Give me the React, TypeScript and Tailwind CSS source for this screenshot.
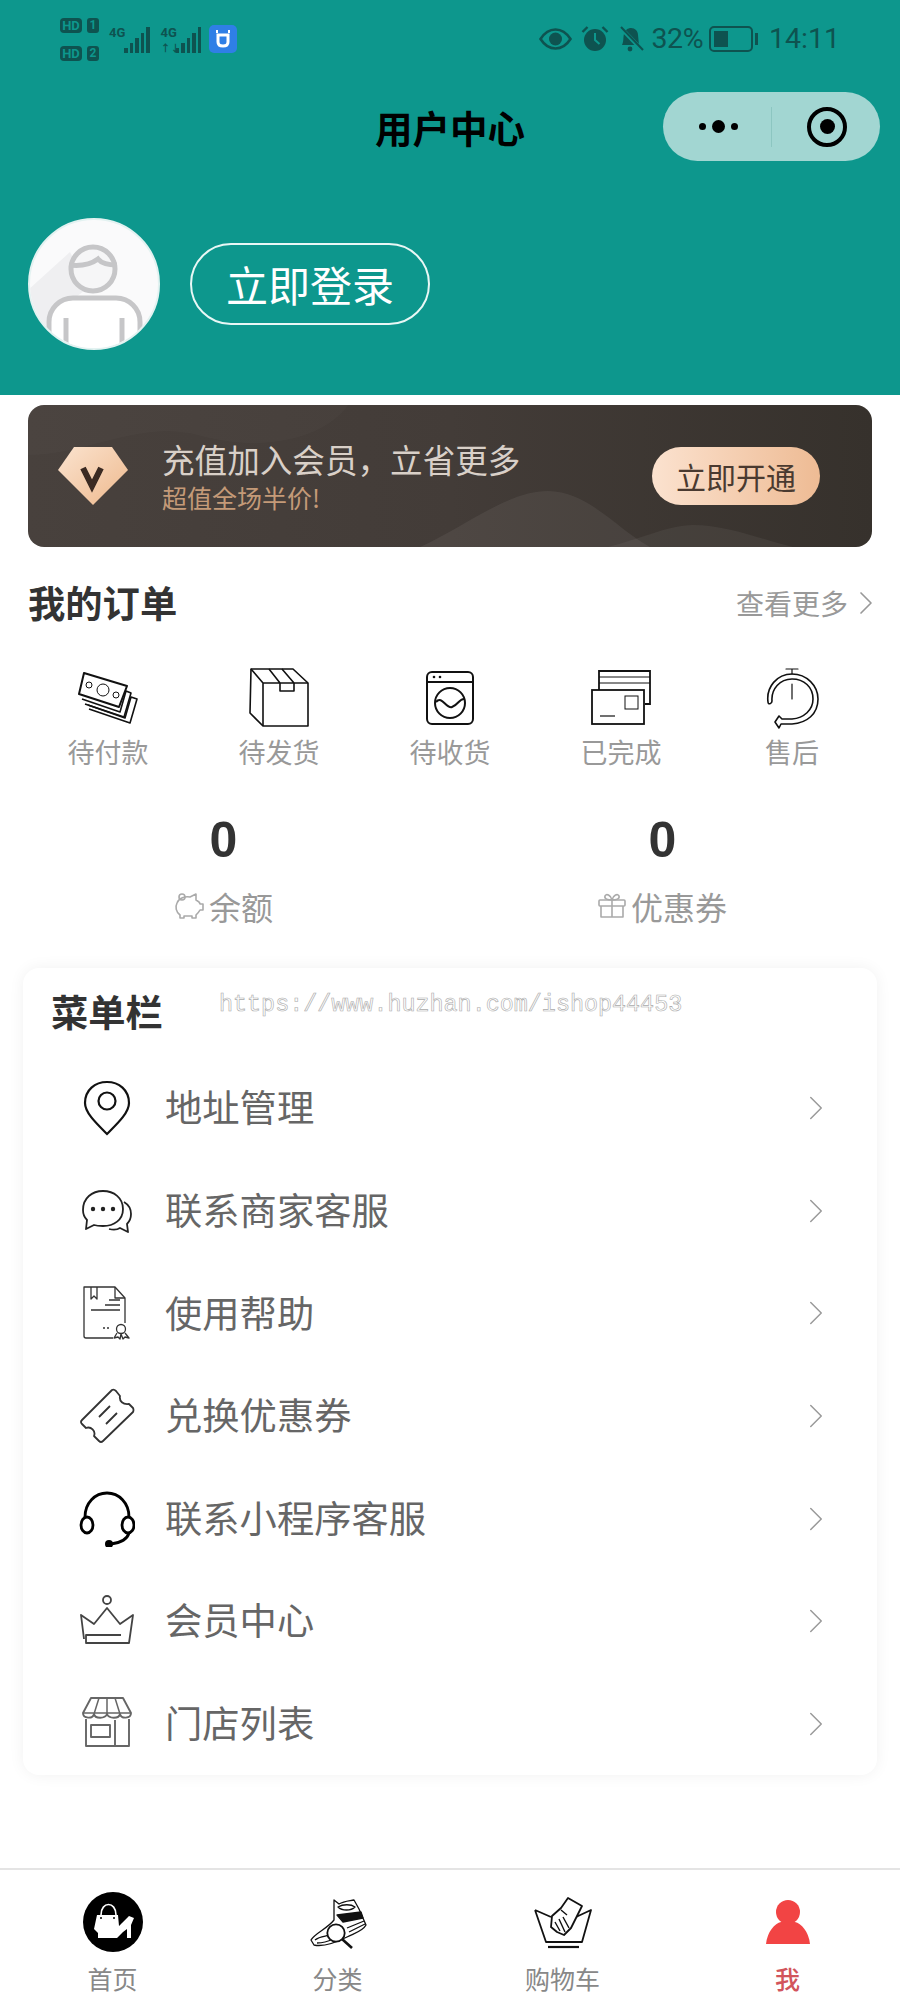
import { ChevronRight } from 'lucide-react'
import type { ReactNode } from 'react'

const Money = () => (
  <svg width="60" height="52" viewBox="0 0 60 52" fill="none" stroke="#111" strokeWidth="1.6" strokeLinejoin="round">
    <path d="M6 1 L49 14 L41 35 L1 22 Z" fill="#fff" strokeWidth="2" />
    <circle cx="25" cy="18" r="6" strokeWidth="1" />
    <circle cx="11" cy="13" r="3" strokeWidth="1" />
    <circle cx="38" cy="23" r="3" strokeWidth="1" />
    <path d="M4 27 L42 40 L48 19 L53 21 L46 45 L7 32" />
    <path d="M10 33 L47 46 L53 25 L59 27 L52 51 L11 37" />
  </svg>
)

const Box = () => (
  <svg width="60" height="60" viewBox="0 0 60 60" fill="none" stroke="#111" strokeWidth="1.6" strokeLinejoin="round">
    <path d="M2 1 H44 L59 15 V58 H14 L1 45 Z" />
    <path d="M2 1 L14 15 V58 M14 15 H59 M20 1 L31 15 V23 H45 V15 L33 1" />
  </svg>
)

const Washer = () => (
  <svg width="48" height="54" viewBox="0 0 48 54" fill="none" stroke="#111" strokeWidth="2">
    <rect x="1" y="1" width="46" height="52" rx="5" />
    <path d="M1 11 H47" />
    <circle cx="8" cy="6" r="1.3" fill="#111" stroke="none" />
    <circle cx="14" cy="6" r="1.3" fill="#111" stroke="none" />
    <circle cx="24" cy="32" r="15" />
    <path d="M10 31 C16 24 20 38 26 36 C32 34 33 28 38 28" />
  </svg>
)

const Cards = () => (
  <svg width="60" height="56" viewBox="0 0 60 56" fill="none" stroke="#111" strokeWidth="1.6">
    <path d="M8 20 V1 H59 V34 H54" strokeWidth="1.8" />
    <path d="M8 7 H59 M8 13 H59" strokeWidth="1" />
    <rect x="1" y="20" width="52" height="34" strokeWidth="1.8" />
    <rect x="34" y="26" width="13" height="13" strokeWidth="1" />
    <path d="M9 46 H24" strokeWidth="1.2" />
  </svg>
)

const Stopwatch = () => (
  <svg width="54" height="62" viewBox="0 0 54 62" fill="none" stroke="#111" strokeWidth="1.6" strokeLinecap="round" strokeLinejoin="round">
    <path d="M21 2 H33 M27 2 V7 M27 17 V32" strokeWidth="1.2" />
    <path d="M3 35 C1 20 12 7 27 7 C42 7 53 19 53 32 C53 47 42 56 27 57 H16 L14 61 L10 55 L14 49 L17 52 H27 C39 51 48 43 48 32 C48 20 39 12 27 12 C15 12 6 22 7 34 C7 37 3 38 3 35 Z" />
  </svg>
)

const Piggy = () => (
  <svg width="30" height="28" viewBox="0 0 30 28" fill="none" stroke="#aaa" strokeWidth="1.6" strokeLinejoin="round">
    <circle cx="8" cy="5" r="3" />
    <path d="M3 11 C5 6 11 4 16 5 L22 2 V8 C24 9 26 11 26 12 H29 V18 H26 C25 20 23 22 22 23 V26 H18 V24 H10 V26 H6 V23 C2 20 1 15 3 11 Z" />
  </svg>
)

const Gift = () => (
  <svg width="28" height="26" viewBox="0 0 28 26" fill="none" stroke="#aaa" strokeWidth="1.6" strokeLinejoin="round">
    <rect x="1" y="7" width="26" height="6" rx="1" />
    <path d="M3 13 V24 H25 V13 M14 7 V24" />
    <path d="M14 7 C10 7 6 6 7 3 C8 0 13 2 14 7 C15 2 20 0 21 3 C22 6 18 7 14 7 Z" />
  </svg>
)

const Pin = () => (
  <svg width="56" height="56" viewBox="0 0 56 56" fill="none" stroke="#111" strokeWidth="2.2">
    <path d="M28 54 C18 44 6 33 6 23 C6 10 16 2 28 2 C40 2 50 10 50 23 C50 33 38 44 28 54 Z" />
    <circle cx="28" cy="21" r="8.5" />
  </svg>
)

const Chat = () => (
  <svg width="56" height="56" viewBox="0 0 56 56" fill="none" stroke="#222" strokeWidth="1.8" strokeLinejoin="round">
    <path d="M4 27 C4 15 13 8 24 8 C35 8 44 15 44 26 C44 37 35 43 24 43 C21 43 18 43 15 42 L7 46 L8 37 C5 34 4 31 4 27 Z" />
    <path d="M45 19 C50 22 52 27 52 31 C52 36 50 39 48 41 L49 49 L41 45 C38 47 34 47 30 46" />
    <circle cx="14" cy="26" r="2.2" fill="#222" stroke="none" />
    <circle cx="24" cy="26" r="2.2" fill="#222" stroke="none" />
    <circle cx="34" cy="26" r="2.2" fill="#222" stroke="none" />
  </svg>
)

const Certificate = () => (
  <svg width="56" height="56" viewBox="0 0 56 56" fill="none" stroke="#333" strokeWidth="1.3" strokeLinejoin="round">
    <path d="M34 53 H7 Q5 53 5 51 V2 H36 L46 13 V38" />
    <path d="M36 2 V13 H46 M12 2 V14 L15 11 L18 14 V2" />
    <path d="M30 15 H41 M26 20 H41 M12 25 H41" />
    <path d="M24 43 H31" strokeDasharray="2 2" />
    <circle cx="42" cy="44" r="4.5" />
    <path d="M38 48 L35 53 L39 52 L41 54 L42 49 L44 54 L46 52 L50 53 L46 48" />
  </svg>
)

const Ticket = () => (
  <svg width="56" height="56" viewBox="0 0 56 56" fill="none" stroke="#333" strokeWidth="1.8" strokeLinejoin="round">
    <path d="M33 2 Q35 1 37 3 L41 8 C40 13 44 17 50 16 L54 20 Q55 22 54 24 L24 53 Q22 55 20 53 L15 48 C17 43 12 38 7 40 L3 36 Q1 34 3 32 Z" />
    <path d="M20 29 L31 18 M27 36 L38 25" />
  </svg>
)

const Headset = () => (
  <svg width="56" height="56" viewBox="0 0 56 56" fill="none" stroke="#000" strokeWidth="2.8">
    <path d="M6 26 C6 12 16 2 28 2 C40 2 50 12 50 26" />
    <ellipse cx="8" cy="34" rx="6" ry="8" />
    <ellipse cx="49" cy="34" rx="6" ry="8" />
    <path d="M50 42 C48 49 40 52 32 53" />
    <circle cx="30" cy="53" r="4" fill="#000" stroke="none" />
  </svg>
)

const Crown = () => (
  <svg width="56" height="56" viewBox="0 0 56 56" fill="none" stroke="#444" strokeWidth="1.8" strokeLinejoin="round">
    <circle cx="28" cy="7" r="4" />
    <path d="M5 46 L2 22 L15 31 L28 15 L41 31 L54 22 L50 50 H7 V42 H42" />
  </svg>
)

const Store = () => (
  <svg width="56" height="56" viewBox="0 0 56 56" fill="none" stroke="#666" strokeWidth="1.9" strokeLinejoin="round">
    <path d="M12 2 H44 L52 17 C52 23 42 23 41 18 C40 23 30 23 28 18 C26 23 16 23 15 18 C14 23 4 23 4 17 Z" />
    <path d="M4 17 H52 M20 2 L15 18 M36 2 L41 18 M28 2 V18" strokeWidth="1.5" />
    <path d="M7 23 V50 H50 V23 M36 24 V50" />
    <rect x="12" y="29" width="19" height="12" />
  </svg>
)

const HomeIcon = () => (
  <svg width="60" height="60" viewBox="0 0 60 60">
    <circle cx="30" cy="30" r="30" fill="#000" />
    <path d="M14 23 H35 L36 34 L39 31 L46 24 L51 26 L48 33 V46 H44 V37 L40 40 L34 46 H15 V41 L11 37 Z" fill="#fff" />
    <path d="M18 23 C18 9 33 9 33 23" fill="none" stroke="#fff" strokeWidth="1.6" />
    <circle cx="18" cy="26" r="1" fill="#000" />
    <circle cx="31" cy="26" r="1" fill="#000" />
  </svg>
)

const ShoeIcon = () => (
  <svg width="58" height="54" viewBox="0 0 58 54" fill="none" stroke="#111" strokeWidth="1.3" strokeLinejoin="round">
    <path d="M2 45 C6 38 18 34 25 25 L25 5 L30 9 C35 6 40 6 45 5 L50 14 L57 30 C54 36 46 38 38 42 C28 47 14 52 5 50 Z" fill="#fff" />
    <path d="M29 12 C34 9 42 9 46 12 C42 16 33 16 29 12 Z" />
    <path d="M28 20 L52 17 L54 23 L34 27 Z" fill="#111" />
    <path d="M38 33 L55 26 M40 37 L56 29 M6 45 C12 40 20 42 24 38 M8 48 C14 48 20 46 24 44" />
    <circle cx="27" cy="38" r="8.7" fill="#fff" strokeWidth="1.8" />
    <path d="M33 44 L43 53" strokeWidth="2.6" />
  </svg>
)

const BasketIcon = () => (
  <svg width="58" height="54" viewBox="-1 0 58 54" fill="none" stroke="#111" strokeWidth="1.8" strokeLinejoin="round">
    <path d="M0 15 L11 47 H47 L56 15 L41 22 M0 15 L16 22" />
    <path d="M13 52 H44" strokeWidth="2.2" />
    <path d="M33 3 L47 11 L41 23 L36 33 L29 40 L22 37 L16 32 L17 21 L26 13 Z" fill="#fff" />
    <path d="M20 27 L25 36 M24 24 L30 37 M28 22 L34 33 M26 15 L32 20" strokeWidth="1.4" />
  </svg>
)

const PersonIcon = () => (
  <svg width="44" height="46" viewBox="0 0 44 46" fill="#f24444">
    <circle cx="22" cy="13" r="12" />
    <path d="M0 45 C1 33 9 24 15 23 H29 C35 24 43 33 44 45 Z" />
  </svg>
)

const orders: { label: string; icon: ReactNode }[] = [
  { label: '待付款', icon: <Money /> },
  { label: '待发货', icon: <Box /> },
  { label: '待收货', icon: <Washer /> },
  { label: '已完成', icon: <Cards /> },
  { label: '售后', icon: <Stopwatch /> },
]

const menus: { label: string; icon: ReactNode }[] = [
  { label: '地址管理', icon: <Pin /> },
  { label: '联系商家客服', icon: <Chat /> },
  { label: '使用帮助', icon: <Certificate /> },
  { label: '兑换优惠券', icon: <Ticket /> },
  { label: '联系小程序客服', icon: <Headset /> },
  { label: '会员中心', icon: <Crown /> },
  { label: '门店列表', icon: <Store /> },
]

const tabs: { label: string; icon: ReactNode; active?: boolean }[] = [
  { label: '首页', icon: <HomeIcon /> },
  { label: '分类', icon: <ShoeIcon /> },
  { label: '购物车', icon: <BasketIcon /> },
  { label: '我', icon: <PersonIcon />, active: true },
]

function Signal({ arrows }: { arrows?: boolean }) {
  return (
    <div className="relative flex items-end gap-[2px] h-[27px] pl-[15px]">
      <span className="absolute left-0 top-0 text-[13px] leading-[13px] font-bold text-[#0e5350] font-['Roboto',sans-serif]">4G</span>
      {arrows && <span className="absolute left-0 bottom-0 text-[10px] leading-[10px] font-bold text-[#0e5350]">↑↓</span>}
      {[5, 10, 15, 20, 26].map(h => (
        <span key={h} className="w-[3.5px] bg-[#0e5350]" style={{ height: h }} />
      ))}
    </div>
  )
}

function SimBadge({ n }: { n: number }) {
  return (
    <div className="flex gap-[5px] items-center text-[#0e5350]">
      <span className="w-[22px] h-[15px] rounded-[4px] bg-[#0e5350] text-[#0d978d] text-[13px] leading-[15px] text-center font-bold font-['Roboto',sans-serif]">HD</span>
      <span className="w-[12px] h-[15px] rounded-[3px] bg-[#0e5350] text-[#0d978d] text-[12px] leading-[15px] text-center font-bold font-['Roboto',sans-serif]">{n}</span>
    </div>
  )
}

function StatusBar() {
  return (
    <div className="h-[78px] pl-[60px] pr-[60px] flex items-center justify-between text-[#0e5350]">
      <div className="flex items-center">
        <div className="flex flex-col gap-[13px]">
          <SimBadge n={1} />
          <SimBadge n={2} />
        </div>
        <div className="ml-[10px]"><Signal /></div>
        <div className="ml-[11px]"><Signal arrows /></div>
        <div className="ml-[8px] w-[28px] h-[28px] rounded-[5px] bg-[#2f7fe6] flex items-center justify-center">
          <svg width="18" height="18" viewBox="0 0 18 18" fill="none" stroke="#fff" strokeWidth="3">
            <path d="M4 5 H14 V12 C14 15 12 16 9 16 C6 16 4 15 4 12 Z" />
            <path d="M3 0 V3 M15 0 V3" strokeWidth="2" />
          </svg>
        </div>
      </div>
      <div className="flex items-center font-['Roboto',sans-serif] text-[28.5px] leading-none">
        <svg width="33" height="22" viewBox="0 0 33 22" fill="none" stroke="#0e5350" strokeWidth="2.6">
          <path d="M1.5 11 C6 4 11 1.5 16.5 1.5 C22 1.5 27 4 31.5 11 C27 18 22 20.5 16.5 20.5 C11 20.5 6 18 1.5 11 Z" />
          <circle cx="16.5" cy="11" r="6.5" fill="#0e5350" stroke="none" />
        </svg>
        <svg className="ml-[9px]" width="28" height="26" viewBox="0 0 27 26" fill="#0e5350">
          <circle cx="13.5" cy="14" r="11" />
          <path d="M1 6 L6 1 M26 6 L21 1" stroke="#0e5350" strokeWidth="2.4" />
          <path d="M13.5 7 V14 L18 18" stroke="#0d978d" strokeWidth="2" fill="none" />
        </svg>
        <svg className="ml-[9px]" width="26" height="28" viewBox="0 0 26 28" fill="#0e5350">
          <path d="M4 20 C6 16 5 12 6 9 C7 5 10 3 13 3 C17 3 20 6 20 10 L21 20 H4 Z" />
          <circle cx="12" cy="24" r="2.4" />
          <path d="M2 2 L24 25" stroke="#0d978d" strokeWidth="4" />
          <path d="M3 2 L25 25" stroke="#0e5350" strokeWidth="2" />
        </svg>
        <span className="ml-[8px] tracking-[-0.5px]">32%</span>
        <div className="ml-[6px] flex items-center">
          <div className="w-[44px] h-[26px] rounded-[5px] border-[2px] border-[#0e5350] p-[3px]">
            <div className="w-[14px] h-full bg-[#0e5350]" />
          </div>
          <div className="ml-[2px] w-[3px] h-[12px] bg-[#0e5350]" />
        </div>
        <span className="ml-[11px]">14:11</span>
      </div>
    </div>
  )
}

function Header() {
  return (
    <header className="h-[395px] bg-[#0d978d]">
      <StatusBar />
      <div className="mt-[14px] grid grid-cols-[1fr_auto_1fr] items-center px-[20px]">
        <div />
        <h1 className="text-[37.5px] leading-[69px] font-bold text-black">用户中心</h1>
        <div className="justify-self-end w-[217px] h-[69px] rounded-full bg-[#a2d6d2] flex items-center">
          <div className="w-[108px] flex items-center justify-center gap-[6px] pl-[2px]">
            <span className="w-[7px] h-[7px] rounded-full bg-black" />
            <span className="w-[13px] h-[13px] rounded-full bg-black" />
            <span className="w-[7px] h-[7px] rounded-full bg-black" />
          </div>
          <div className="w-px h-[40px] bg-[#8cc6c1]" />
          <div className="flex-1 flex justify-center pl-[2px]">
            <div className="w-[40px] h-[40px] rounded-full border-[4px] border-black flex items-center justify-center">
              <span className="w-[15px] h-[15px] rounded-full bg-black" />
            </div>
          </div>
        </div>
      </div>
      <div className="mt-[57px] pl-[28px] flex items-center gap-[30px]">
        <div className="w-[132px] h-[132px] rounded-full overflow-hidden border-[2px] border-[#e3f2f1] bg-[#fafafb]">
          <svg width="128" height="128" viewBox="2 2 128 128" fill="none">
            <path d="M0 72 L42 34 L60 70 L20 100 L10 132 H0 Z" fill="#efeff1" />
            <rect x="21" y="80" width="91" height="70" rx="24" fill="#fff" stroke="#c6c6c8" strokeWidth="5" />
            <path d="M38 100 V134 M94 100 V134" stroke="#c6c6c8" strokeWidth="5" />
            <circle cx="65" cy="51" r="22" fill="#f6f6f7" stroke="#c6c6c8" strokeWidth="5" />
            <path d="M41 47 C50 48 62 47 70 41 C74 46 82 47 89 47" stroke="#c6c6c8" strokeWidth="5" />
          </svg>
        </div>
        <button className="w-[240px] h-[82px] rounded-full border-[2px] border-[#e8f7f5] text-white text-[42px] leading-[74px]">立即登录</button>
      </div>
    </header>
  )
}

function VipBanner() {
  return (
    <div className="relative mx-[28px] mt-[10px] h-[142px] rounded-[16px] overflow-hidden bg-gradient-to-r from-[#48413d] via-[#433c38] to-[#36312c] flex items-center">
      <svg className="absolute inset-0" width="844" height="142" viewBox="0 0 844 142">
        <path d="M0 0 H320 C300 30 240 50 170 30 C110 15 60 50 0 50 Z" fill="#fff" opacity="0.02" />
        <path d="M392 142 C440 120 480 86 520 86 C560 86 590 125 622 142 Z" fill="#fff" opacity="0.06" />
        <path d="M580 142 C610 135 640 120 665 120 C700 120 735 135 765 142 Z" fill="#fff" opacity="0.05" />
      </svg>
      <svg className="relative ml-[29px]" width="72" height="58" viewBox="0 0 72 58">
        <defs>
          <linearGradient id="gem" x1="0" y1="0" x2="1" y2="1">
            <stop offset="0" stopColor="#fbe3cf" />
            <stop offset="1" stopColor="#eeb98d" />
          </linearGradient>
        </defs>
        <path d="M17 0 H55 L71 23 L36 58 L1 23 Z" fill="url(#gem)" />
        <path d="M26 21 L35 39 L44 21" fill="none" stroke="#3b2a22" strokeWidth="6" strokeLinejoin="miter" />
      </svg>
      <div className="relative ml-[33px] flex-1">
        <p className="text-[32.6px] leading-[40px] text-[#d9d0c8]">充值加入会员，立省更多</p>
        <p className="mt-[2px] text-[25px] leading-[32px] text-[#c49a78]">超值全场半价!</p>
      </div>
      <button className="relative mr-[52px] w-[168px] h-[58px] rounded-full bg-gradient-to-r from-[#fbe2cf] to-[#eebb94] text-[30px] leading-none text-[#4a3a30]">立即开通</button>
    </div>
  )
}

function Orders() {
  return (
    <section>
      <div className="mt-[30px] h-[52px] pl-[28px] pr-[27px] flex items-center justify-between">
        <h2 className="text-[37.3px] font-bold text-[#333]">我的订单</h2>
        <div className="flex items-center text-[28px] text-[#999]">
          查看更多
          <ChevronRight size={40} strokeWidth={1} className="ml-[-2px] mr-[-13px]" />
        </div>
      </div>
      <div className="mt-[36px] px-[22.5px] grid grid-cols-5">
        {orders.map(o => (
          <div key={o.label} className="flex flex-col items-center">
            <div className="h-[65px] flex items-center justify-center">{o.icon}</div>
            <span className="h-[44px] text-[27px] leading-[44px] text-[#999]">{o.label}</span>
          </div>
        ))}
      </div>
      <div className="mt-[35px] pl-[4px] pr-[18px] grid grid-cols-2">
        {[
          { label: '余额', icon: <Piggy /> },
          { label: '优惠券', icon: <Gift /> },
        ].map(s => (
          <div key={s.label} className="flex flex-col items-center">
            <span className="h-[60px] text-[50px] leading-[62px] font-bold text-[#333] font-['Liberation_Sans',sans-serif]">0</span>
            <div className="mt-[15px] h-[44px] flex items-center gap-[5px] text-[32px] text-[#999]">
              {s.icon}
              {s.label}
            </div>
          </div>
        ))}
      </div>
    </section>
  )
}

function Menu() {
  return (
    <section className="relative mx-[23px] mt-[40px] rounded-[16px] bg-white shadow-[0_0_16px_rgba(0,0,0,0.06)]">
      <h2 className="h-[89px] pt-[18px] pl-[28px] text-[37.3px] leading-[50px] font-bold text-[#333]">菜单栏</h2>
      <span className="absolute left-[196px] top-[22px] text-[23.4px] leading-[30px] text-transparent font-['Liberation_Mono',monospace] [-webkit-text-stroke:0.6px_#aaa]">https://www.huzhan.com/ishop44453</span>
      {menus.map(m => (
        <div key={m.label} className="h-[102.6px] pl-[56px] pr-[40.5px] flex items-center">
          <div className="w-[56px] h-[56px]">{m.icon}</div>
          <span className="ml-[30px] pb-[2px] flex-1 text-[37.3px] text-[#666]">{m.label}</span>
          <ChevronRight size={42} strokeWidth={0.85} className="text-[#999]" />
        </div>
      ))}
    </section>
  )
}

function TabBar() {
  return (
    <nav className="mt-auto h-[132px] border-t-[2px] border-[#e4e4e4] grid grid-cols-4">
      {tabs.map(t => (
        <div key={t.label} className="flex flex-col items-center">
          <div className="mt-[22px] h-[60px] flex items-center justify-center">{t.icon}</div>
          <span className={t.active ? 'mt-[8px] text-[25px] leading-[36px] font-medium text-[#d2555c]' : 'mt-[8px] text-[25px] leading-[36px] text-[#888]'}>{t.label}</span>
        </div>
      ))}
    </nav>
  )
}

export default function App() {
  return (
    <div className="w-[900px] h-[2000px] flex flex-col bg-white font-['Noto_Sans_CJK_SC','Noto_Sans',sans-serif]">
      <Header />
      <VipBanner />
      <Orders />
      <Menu />
      <TabBar />
    </div>
  )
}
